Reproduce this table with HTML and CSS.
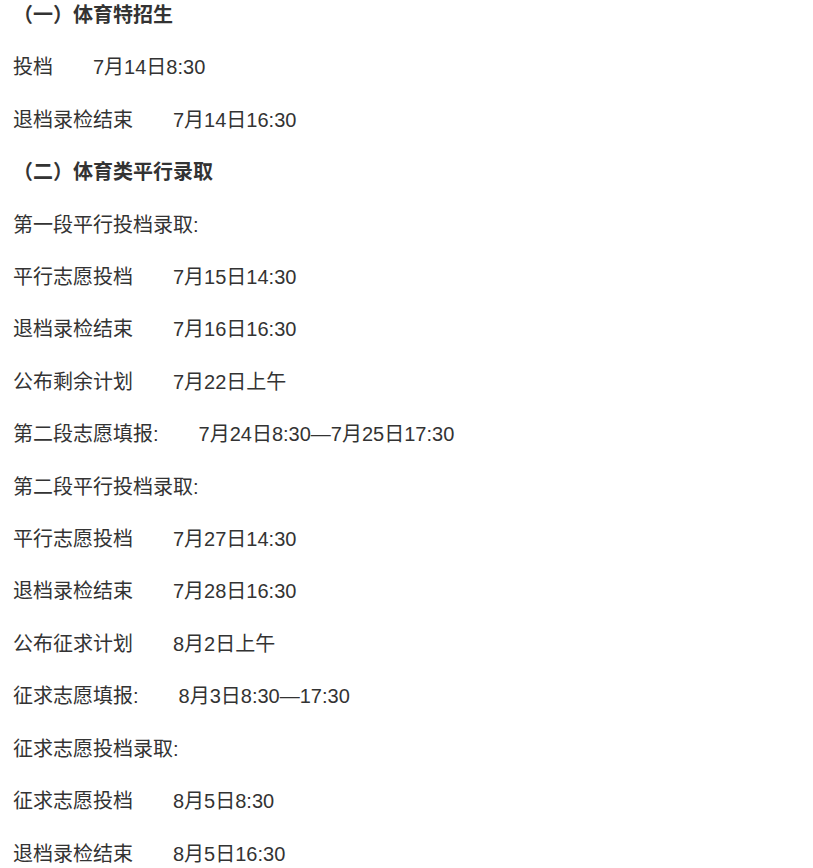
FILE: index.html
```html
<!DOCTYPE html>
<html lang="zh-CN">
<head>
    <meta charset="UTF-8">
    <title>体育类录取时间安排</title>
    <link rel="stylesheet" href="styles.css">
</head>
<body>
    <div class="article">
        <p class="section-title">（一）体育特招生</p>
        <p>投档　　7月14日8:30</p>
        <p>退档录检结束　　7月14日16:30</p>
        <p class="section-title">（二）体育类平行录取</p>
        <p>第一段平行投档录取:</p>
        <p>平行志愿投档　　7月15日14:30</p>
        <p>退档录检结束　　7月16日16:30</p>
        <p>公布剩余计划　　7月22日上午</p>
        <p>第二段志愿填报:　　7月24日8:30—7月25日17:30</p>
        <p>第二段平行投档录取:</p>
        <p>平行志愿投档　　7月27日14:30</p>
        <p>退档录检结束　　7月28日16:30</p>
        <p>公布征求计划　　8月2日上午</p>
        <p>征求志愿填报:　　8月3日8:30—17:30</p>
        <p>征求志愿投档录取:</p>
        <p>征求志愿投档　　8月5日8:30</p>
        <p>退档录检结束　　8月5日16:30</p>
    </div>
</body>
</html>
```

FILE: styles.css
```css
body {
    margin: 0;
    background: #fff;
    color: #333;
    font-family: "Liberation Sans", "Noto Sans CJK SC", sans-serif;
    font-size: 20px;
}

.article {
    padding: 0 13px;
    margin-top: -1px;
}

.article p {
    margin: 0 0 20px;
    line-height: 32.4px;
    white-space: pre;
}

.section-title {
    font-weight: bold;
}
```
